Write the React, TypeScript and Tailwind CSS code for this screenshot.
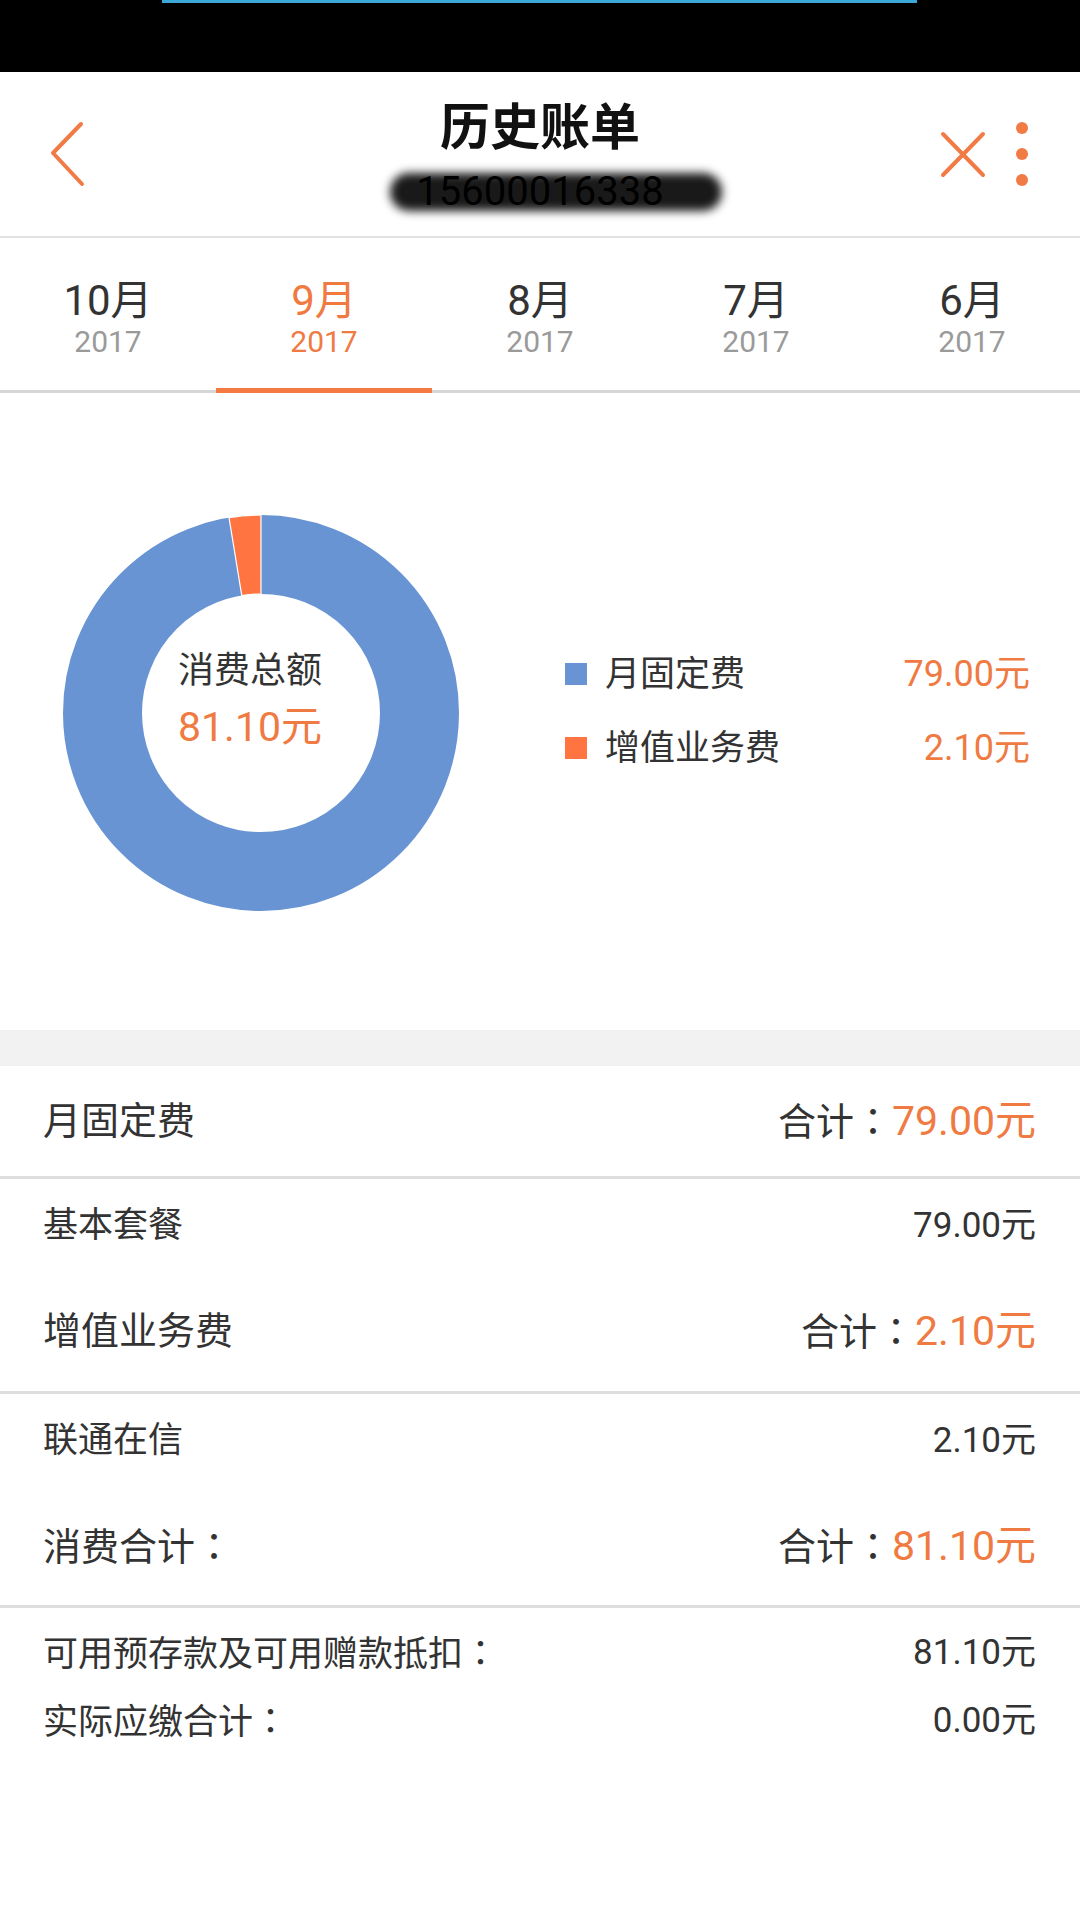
import * as React from 'react'

const ORANGE = 'text-[#ef7a42]'

const months = [
  { m: '10月', y: '2017' },
  { m: '9月', y: '2017', active: true },
  { m: '8月', y: '2017' },
  { m: '7月', y: '2017' },
  { m: '6月', y: '2017' },
]

// centred full-width colon, as the phone's font draws it
const Colon = () => <span className="font-['Noto_Sans_CJK_TC']">：</span>

// Donut chart: blue annulus with a thin orange slice just left of 12 o'clock
const Donut = () => (
  <svg width="396" height="396" viewBox="0 0 396 396">
    <circle cx="198" cy="198" r="158.5" fill="none" stroke="#6894d3" strokeWidth="79" />
    <path
      d="M166 2.6 A198 198 0 0 1 198 0 L198 79 A119 119 0 0 0 178.77 80.56 Z"
      fill="#ff7440"
      stroke="#ffffff"
      strokeWidth="1.2"
    />
  </svg>
)

const Row = ({
  label,
  value,
  total,
  colon,
  className,
  size = 'text-[38px]',
}: {
  label: string
  value: string
  total?: boolean
  colon?: boolean
  className?: string
  size?: string
}) => (
  <div className={`flex items-center justify-between pl-[43px] pr-[44px] ${className ?? ''}`}>
    <span className={`${size} text-[#333]`}>
      {label}
      {colon && <Colon />}
    </span>
    {total
      ? (
          <span className={`${size} text-[#333]`}>
            合计
            <Colon />
            <span className={`text-[41px] ${ORANGE}`}>{value}</span>
          </span>
        )
      : (
          <span className={`${size} text-[#333]`}>{value}</span>
        )}
  </div>
)

export default function App() {
  return (
    <div className="w-[1080px] h-[1920px] overflow-hidden bg-white font-[Roboto,'Noto_Sans_CJK_SC',sans-serif] leading-none">
      {/* status bar */}
      <div className="h-[72px] bg-black">
        <div className="ml-[162px] w-[755px] h-[3px] bg-[#3ca8d8]" />
      </div>

      {/* header */}
      <div className="h-[166px] flex border-b-2 border-[#e2e2e2]">
        <div className="w-[200px] flex items-center pl-[46px]">
          <svg width="40" height="70" viewBox="0 0 40 70">
            <polyline
              points="35,5 7,34 36,65"
              fill="none"
              stroke="#f27a45"
              strokeWidth="4"
              strokeLinecap="round"
              strokeLinejoin="round"
            />
          </svg>
        </div>
        <div className="flex-1 flex flex-col items-center pt-[26px]">
          <div className="h-[60px] flex items-center text-[50px] font-bold text-[#111]">历史账单</div>
          <div className="relative mt-[12px] h-[44px] flex items-center">
            <span className="text-[40px] text-black px-[14px]">15600016338</span>
            <div className="absolute left-[-12px] right-[-44px] top-[3px] h-[38px] rounded-full bg-black/90 blur-[5px]" />
          </div>
        </div>
        <div className="w-[200px] flex items-center justify-end gap-[26px] pr-[50px]">
          <svg width="50" height="50" viewBox="0 0 50 50">
            <path d="M5 5 L45 46 M45 5 L5 46" stroke="#f27a45" strokeWidth="4" strokeLinecap="round" />
          </svg>
          <svg width="16" height="72" viewBox="0 0 16 72">
            <circle cx="8" cy="10" r="6" fill="#f27a45" />
            <circle cx="8" cy="36" r="6" fill="#f27a45" />
            <circle cx="8" cy="62" r="6" fill="#f27a45" />
          </svg>
        </div>
      </div>

      {/* month tabs */}
      <div className="flex h-[155px]">
        {months.map(t => (
          <div key={t.m} className="flex-1 flex flex-col items-center">
            <div
              className={`mt-[40px] h-[46px] flex items-center text-[42px] ${t.active ? ORANGE : 'text-[#333]'}`}
            >
              {t.m}
            </div>
            <div
              className={`h-[36px] flex items-center text-[30px] ${t.active ? ORANGE : 'text-[#9a9a9a]'}`}
            >
              {t.y}
            </div>
            <div className="mt-auto w-full h-[5px] flex flex-col justify-end">
              {t.active
                ? <div className="h-[5px] bg-[#f47a42]" />
                : <div className="h-[3px] bg-[#d6d6d6]" />}
            </div>
          </div>
        ))}
      </div>

      {/* chart */}
      <div className="h-[637px] flex items-start pl-[63px]">
        <div className="relative mt-[122px] w-[396px] h-[396px]">
          <Donut />
          <div className="absolute inset-0 flex flex-col items-center pt-[136px] pr-[22px]">
            <div className="h-[40px] flex items-center text-[36px] text-[#333]">消费总额</div>
            <div className={`mt-[14px] h-[44px] flex items-center text-[41px] ${ORANGE}`}>81.10元</div>
          </div>
        </div>
        <div className="mt-[244px] ml-[106px] w-[465px] flex flex-col">
          {[
            { c: 'bg-[#6894d3]', l: '月固定费', v: '79.00元' },
            { c: 'bg-[#ff7440]', l: '增值业务费', v: '2.10元' },
          ].map(r => (
            <div key={r.l} className="h-[74px] flex items-center">
              <div className={`w-[22px] h-[22px] ${r.c}`} />
              <span className="ml-[18px] text-[35px] text-[#333]">{r.l}</span>
              <span className={`ml-auto text-[36px] ${ORANGE}`}>{r.v}</span>
            </div>
          ))}
        </div>
      </div>

      {/* gray gap */}
      <div className="h-[36px] bg-[#f2f2f2]" />

      {/* detail list */}
      <Row label="月固定费" value="79.00元" total className="h-[113px] border-b-[3px] border-[#dedede]" />
      <Row label="基本套餐" value="79.00元" size="text-[35px]" className="h-[92px]" />
      <Row label="增值业务费" value="2.10元" total className="h-[123px] border-b-[3px] border-[#dedede]" />
      <Row label="联通在信" value="2.10元" size="text-[35px]" className="h-[92px]" />
      <Row label="消费合计" colon value="81.10元" total className="h-[122px] border-b-[3px] border-[#dedede]" />
      <div className="pt-[10px]">
        <Row label="可用预存款及可用赠款抵扣" colon value="81.10元" size="text-[35px]" className="h-[68px]" />
        <Row label="实际应缴合计" colon value="0.00元" size="text-[35px]" className="h-[68px]" />
      </div>
    </div>
  )
}
